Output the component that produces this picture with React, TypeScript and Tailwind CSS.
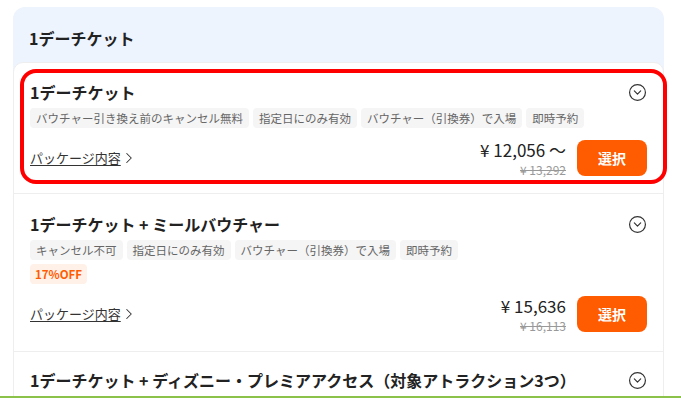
import React from "react";
import { CircleChevronDown, ChevronRight } from "lucide-react";

const font = { fontFamily: '"Noto Sans CJK JP", "Noto Sans", sans-serif' };

function Tag({ children }: { children: React.ReactNode }) {
  return (
    <span className="h-5 px-[6px] rounded bg-[#f5f5f5] text-[11.5px] leading-5 text-[#666] whitespace-nowrap">
      {children}
    </span>
  );
}

function Section({
  title,
  tags,
  off,
  price,
  orig,
  pad,
}: {
  title: string;
  tags: string[];
  off?: string;
  price: string;
  orig: string;
  pad: string;
}) {
  return (
    <div className={`px-4 ${pad}`}>
      <div className="flex items-center justify-between">
        <div className="text-[16px] leading-6 font-bold text-[#222] whitespace-nowrap">{title}</div>
        <CircleChevronDown size={19} strokeWidth={1.5} className="text-[#333] shrink-0" />
      </div>
      <div className="mt-1 flex flex-wrap gap-1">
        {tags.map((t) => (
          <Tag key={t}>{t}</Tag>
        ))}
      </div>
      {off && (
        <div className="mt-1 flex">
          <span className="h-5 px-[5px] rounded bg-[#fff1e8] text-[11.5px] leading-5 font-bold text-[#ff5b00]">{off}</span>
        </div>
      )}
      <div className="mt-[10px] flex items-center justify-between">
        <div className="flex items-center text-[13px] text-[#333]">
          <span className="underline underline-offset-2">パッケージ内容</span>
          <ChevronRight size={18} strokeWidth={1.4} className="ml-[-1px]" />
        </div>
        <div className="flex items-center gap-[11px]">
          <div className="flex flex-col items-end">
            <div className="text-[17px] leading-6 text-[#222]">{price}</div>
            <div className="text-[12px] leading-4 text-[#999] line-through">{orig}</div>
          </div>
          <button className="w-[70px] h-9 rounded-lg bg-[#ff5b00] text-white text-[14px] font-bold">選択</button>
        </div>
      </div>
    </div>
  );
}

export default function App() {
  return (
    <div className="w-[681px] h-[398px] overflow-hidden bg-white flex flex-col" style={font}>
      <div className="h-[396px] overflow-hidden pl-[13px] pr-[17px] pt-[7px]">
        <div className="relative rounded-xl bg-[#edf4fd]">
          <div className="px-4 pt-[19px] pb-[12px] text-[16px] leading-6 font-bold text-[#222]">1デーチケット</div>
          <div className="bg-white rounded-t-[10px] border border-[#eeeeee]">
            <Section
              pad="pt-[17px] pb-[15px]"
              title="1デーチケット"
              tags={["バウチャー引き換え前のキャンセル無料", "指定日にのみ有効", "バウチャー（引換券）で入場", "即時予約"]}
              price="¥ 12,056 〜"
              orig="¥ 13,292"
            />
            <Section
              pad="pt-[18px] pb-[17px] border-t border-[#eeeeee]"
              title="1デーチケット + ミールバウチャー"
              tags={["キャンセル不可", "指定日にのみ有効", "バウチャー（引換券）で入場", "即時予約"]}
              off="17%OFF"
              price="¥ 15,636"
              orig="¥ 16,113"
            />
            <Section
              pad="pt-[16px] pb-[17px] border-t border-[#eeeeee]"
              title="1デーチケット + ディズニー・プレミアアクセス（対象アトラクション3つ）"
              tags={["キャンセル不可", "指定日にのみ有効"]}
              price="¥ 20,000"
              orig="¥ 21,000"
            />
          </div>
          <div className="pointer-events-none absolute left-[7px] top-[62px] w-[647px] h-[115px] rounded-[16px] border-4 border-[#ff0000]" />
        </div>
      </div>
      <div className="h-[2px] bg-[#8bc34a]" />
    </div>
  );
}
